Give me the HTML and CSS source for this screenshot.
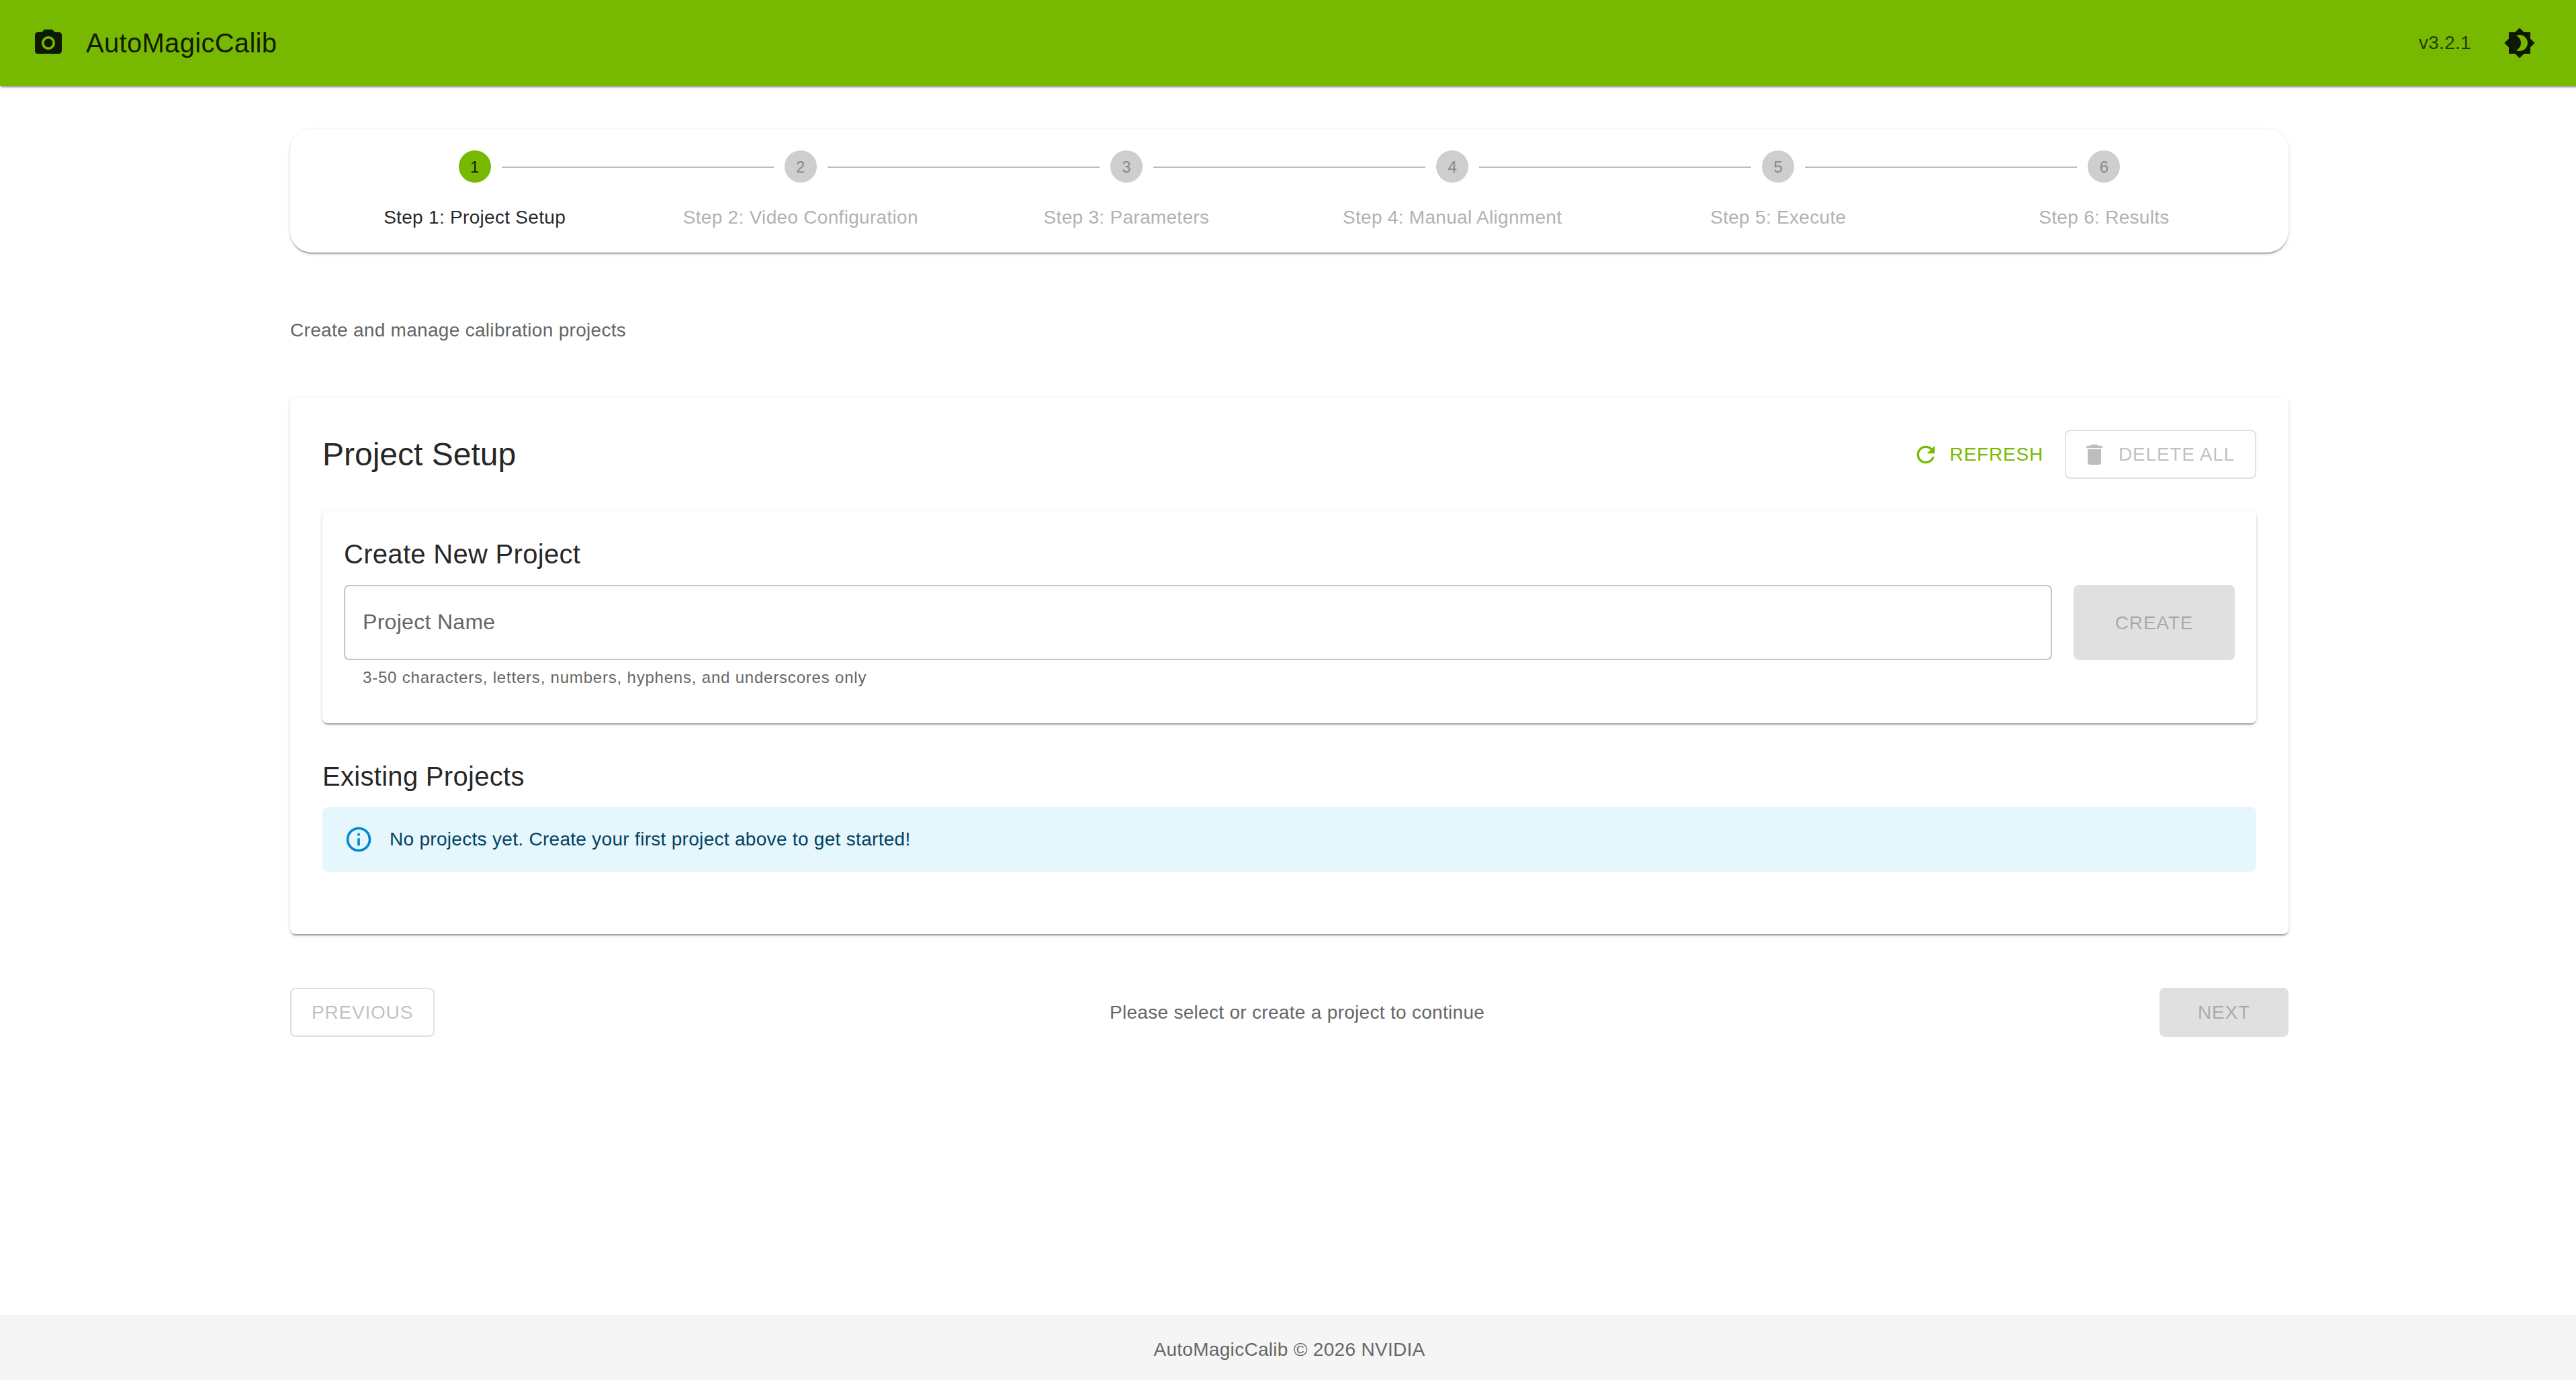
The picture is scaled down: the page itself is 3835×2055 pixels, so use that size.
FILE: index.html
```html
<!DOCTYPE html>
<html lang="en">
<head>
    <meta charset="UTF-8">
    <meta name="viewport" content="width=device-width, initial-scale=1.0">
    <title>AutoMagicCalib</title>
    <link rel="stylesheet" href="styles.css">
</head>
<body>
    <div class="page">
        <header class="app-bar">
            <svg class="icon" viewBox="0 0 24 24"><circle cx="12" cy="12" r="3.2"/><path d="M9 2 7.17 4H4c-1.1 0-2 .9-2 2v12c0 1.1.9 2 2 2h16c1.1 0 2-.9 2-2V6c0-1.1-.9-2-2-2h-3.17L15 2H9zm3 15c-2.76 0-5-2.24-5-5s2.24-5 5-5 5 2.24 5 5-2.24 5-5 5z"/></svg>
            <h1 class="app-title">AutoMagicCalib</h1>
            <span class="version">v3.2.1</span>
            <button class="icon-button" aria-label="Toggle theme">
                <svg class="icon" viewBox="0 0 24 24"><path d="M20 8.69V4h-4.69L12 .69 8.69 4H4v4.69L.69 12 4 15.31V20h4.69L12 23.31 15.31 20H20v-4.69L23.31 12 20 8.69zM12 18c-.89 0-1.74-.2-2.5-.55C11.56 16.5 13 14.42 13 12s-1.44-4.5-3.5-5.45C10.26 6.2 11.11 6 12 6c3.31 0 6 2.69 6 6s-2.69 6-6 6z"/></svg>
            </button>
        </header>

        <main class="container">
            <ol class="stepper">
                <li class="step active"><span class="step-icon">1</span><span class="step-label">Step 1: Project Setup</span></li>
                <li class="step"><span class="step-icon">2</span><span class="step-label">Step 2: Video Configuration</span></li>
                <li class="step"><span class="step-icon">3</span><span class="step-label">Step 3: Parameters</span></li>
                <li class="step"><span class="step-icon">4</span><span class="step-label">Step 4: Manual Alignment</span></li>
                <li class="step"><span class="step-icon">5</span><span class="step-label">Step 5: Execute</span></li>
                <li class="step"><span class="step-icon">6</span><span class="step-label">Step 6: Results</span></li>
            </ol>

            <p class="intro">Create and manage calibration projects</p>

            <section class="card setup">
                <div class="setup-header">
                    <h2>Project Setup</h2>
                    <div class="actions">
                        <button class="btn btn-text">
                            <svg class="btn-icon" viewBox="0 0 24 24"><path d="M17.65 6.35C16.2 4.9 14.21 4 12 4c-4.42 0-7.99 3.58-7.99 8s3.57 8 7.99 8c3.73 0 6.84-2.55 7.73-6h-2.08c-.82 2.33-3.04 4-5.65 4-3.31 0-6-2.69-6-6s2.69-6 6-6c1.66 0 3.14.69 4.22 1.78L13 11h7V4l-2.35 2.35z"/></svg>
                            Refresh
                        </button>
                        <button class="btn btn-outlined" disabled>
                            <svg class="btn-icon" viewBox="0 0 24 24"><path d="M6 19c0 1.1.9 2 2 2h8c1.1 0 2-.9 2-2V7H6v12zM19 4h-3.5l-1-1h-5l-1 1H5v2h14V4z"/></svg>
                            Delete All
                        </button>
                    </div>
                </div>

                <div class="card create">
                    <h3>Create New Project</h3>
                    <div class="create-row">
                        <div class="field">
                            <input type="text" placeholder="Project Name">
                            <p class="helper">3-50 characters, letters, numbers, hyphens, and underscores only</p>
                        </div>
                        <button class="btn btn-contained btn-create" disabled>Create</button>
                    </div>
                </div>

                <h3>Existing Projects</h3>
                <div class="alert">
                    <svg class="alert-icon" viewBox="0 0 24 24"><path d="M11,9H13V7H11M12,20C7.59,20 4,16.41 4,12C4,7.59 7.59,4 12,4C16.41,4 20,7.59 20,12C20,16.41 16.41,20 12,20M12,2A10,10 0 0,0 2,12A10,10 0 0,0 12,22A10,10 0 0,0 22,12A10,10 0 0,0 12,2M11,17H13V11H11V17Z"/></svg>
                    <p>No projects yet. Create your first project above to get started!</p>
                </div>
            </section>

            <div class="nav-row">
                <button class="btn btn-outlined" disabled>Previous</button>
                <p class="nav-hint">Please select or create a project to continue</p>
                <button class="btn btn-contained btn-next" disabled>Next</button>
            </div>
        </main>

        <footer class="footer">AutoMagicCalib © 2026 NVIDIA</footer>
    </div>
</body>
</html>
```
FILE: styles.css
```css
* { box-sizing: border-box; }
html, body { height: 100%; overflow: hidden; }
body { margin: 0; font-family: "Liberation Sans", Arial, sans-serif; font-size: 28px; line-height: 40px; letter-spacing: 0.01071em; color: rgba(0, 0, 0, 0.87); background: #fff; }
h1, h2, h3, p { margin: 0; font-weight: 400; }
svg { fill: currentColor; flex-shrink: 0; }
button, input { font: inherit; color: inherit; }

.page { width: 3839px; height: 2062px; display: flex; flex-direction: column; }

/* Header */
.app-bar { height: 128px; flex-shrink: 0; display: flex; align-items: center; padding: 0 48px; background: #76b900; box-shadow: 0 4px 2px -2px rgba(0, 0, 0, 0.2), 0 2px 2px rgba(0, 0, 0, 0.14), 0 2px 6px rgba(0, 0, 0, 0.12); }
.icon { width: 48px; height: 48px; display: block; }
.app-title { flex: 1; margin-left: 32px; font-size: 40px; line-height: 64px; letter-spacing: 0.0075em; }
.version { margin-right: 32px; opacity: 0.8; }
.icon-button { padding: 16px; border: none; background: none; cursor: pointer; }

.container { width: 3071px; flex: 1; margin: 0 auto; padding: 64px 48px 0; }
.card, .stepper { background: #fff; box-shadow: 0 4px 2px -2px rgba(0, 0, 0, 0.2), 0 2px 2px rgba(0, 0, 0, 0.14), 0 2px 6px rgba(0, 0, 0, 0.12); }
.card { border-radius: 8px; }

/* Stepper */
.stepper { display: flex; margin: 0; padding: 32px; border-radius: 32px; list-style: none; }
.step { flex: 1; position: relative; display: flex; flex-direction: column; align-items: center; gap: 32px; }
.step + .step::before { content: ""; position: absolute; top: 24px; left: calc(-50% + 40px); right: calc(50% + 40px); height: 2px; background: #bdbdbd; }
.step-icon { width: 48px; height: 48px; border-radius: 50%; background: #cecece; color: #8a8a8a; font-size: 24px; line-height: 49px; letter-spacing: 0; text-align: center; }
.step-label { color: #b2b2b2; }
.active .step-icon { background: #76b900; color: rgba(0, 0, 0, 0.87); }
.active .step-label { color: rgba(0, 0, 0, 0.87); }

.intro { margin: 96px 0 80px; color: #666; }

/* Project setup */
.setup { padding: 48px 48px 93px; }
.setup-header { display: flex; align-items: center; justify-content: space-between; margin-bottom: 48px; }
h2 { font-size: 48px; line-height: 64px; letter-spacing: 0; }
h3 { font-size: 40px; line-height: 64px; letter-spacing: 0.0075em; margin-bottom: 14px; }
.actions { display: flex; gap: 16px; }
.create { padding: 32px 32px 48px; margin-bottom: 47px; }
.create-row { display: flex; align-items: flex-start; gap: 32px; }
.field { flex: 1; }
input { display: block; width: 100%; height: 112px; padding: 0 26px 2px; border: 2px solid #c4c4c4; border-radius: 8px; background: transparent; font-size: 32px; letter-spacing: 0.00938em; }
input::placeholder { color: #666; opacity: 1; }
.helper { margin: 6px 28px 0; font-size: 24px; line-height: 39.8px; letter-spacing: 0.03333em; color: #666; }

.alert { display: flex; align-items: center; gap: 24px; height: 96px; padding: 0 32px; border-radius: 8px; background: #e5f6fd; color: #014361; }
.alert-icon { width: 44px; height: 44px; color: #0288d1; }

/* Buttons */
.btn { display: inline-flex; align-items: center; justify-content: center; height: 73px; padding: 0 30px; border: 2px solid transparent; border-radius: 8px; background: none; font-size: 28px; line-height: 49px; letter-spacing: 0.02857em; text-transform: uppercase; cursor: pointer; }
.btn:disabled { color: rgba(0, 0, 0, 0.26); cursor: default; }
.btn-icon { width: 40px; height: 40px; margin: 0 16px 0 -8px; }
.btn-text { padding: 0 14px; color: #76b900; }
.btn-text .btn-icon { margin-left: -4px; }
.btn-outlined:disabled { border-color: rgba(0, 0, 0, 0.12); }
.btn-contained { border: none; background: #e0e0e0; }
.btn-create { width: 240px; height: 112px; }
.btn-next { width: 192px; }

.nav-row { display: flex; align-items: center; justify-content: space-between; margin-top: 80px; }
.nav-hint { padding-top: 1px; color: #666; }

.footer { flex-shrink: 0; padding: 32px; background: #f5f5f5; text-align: center; color: #666; }
```
